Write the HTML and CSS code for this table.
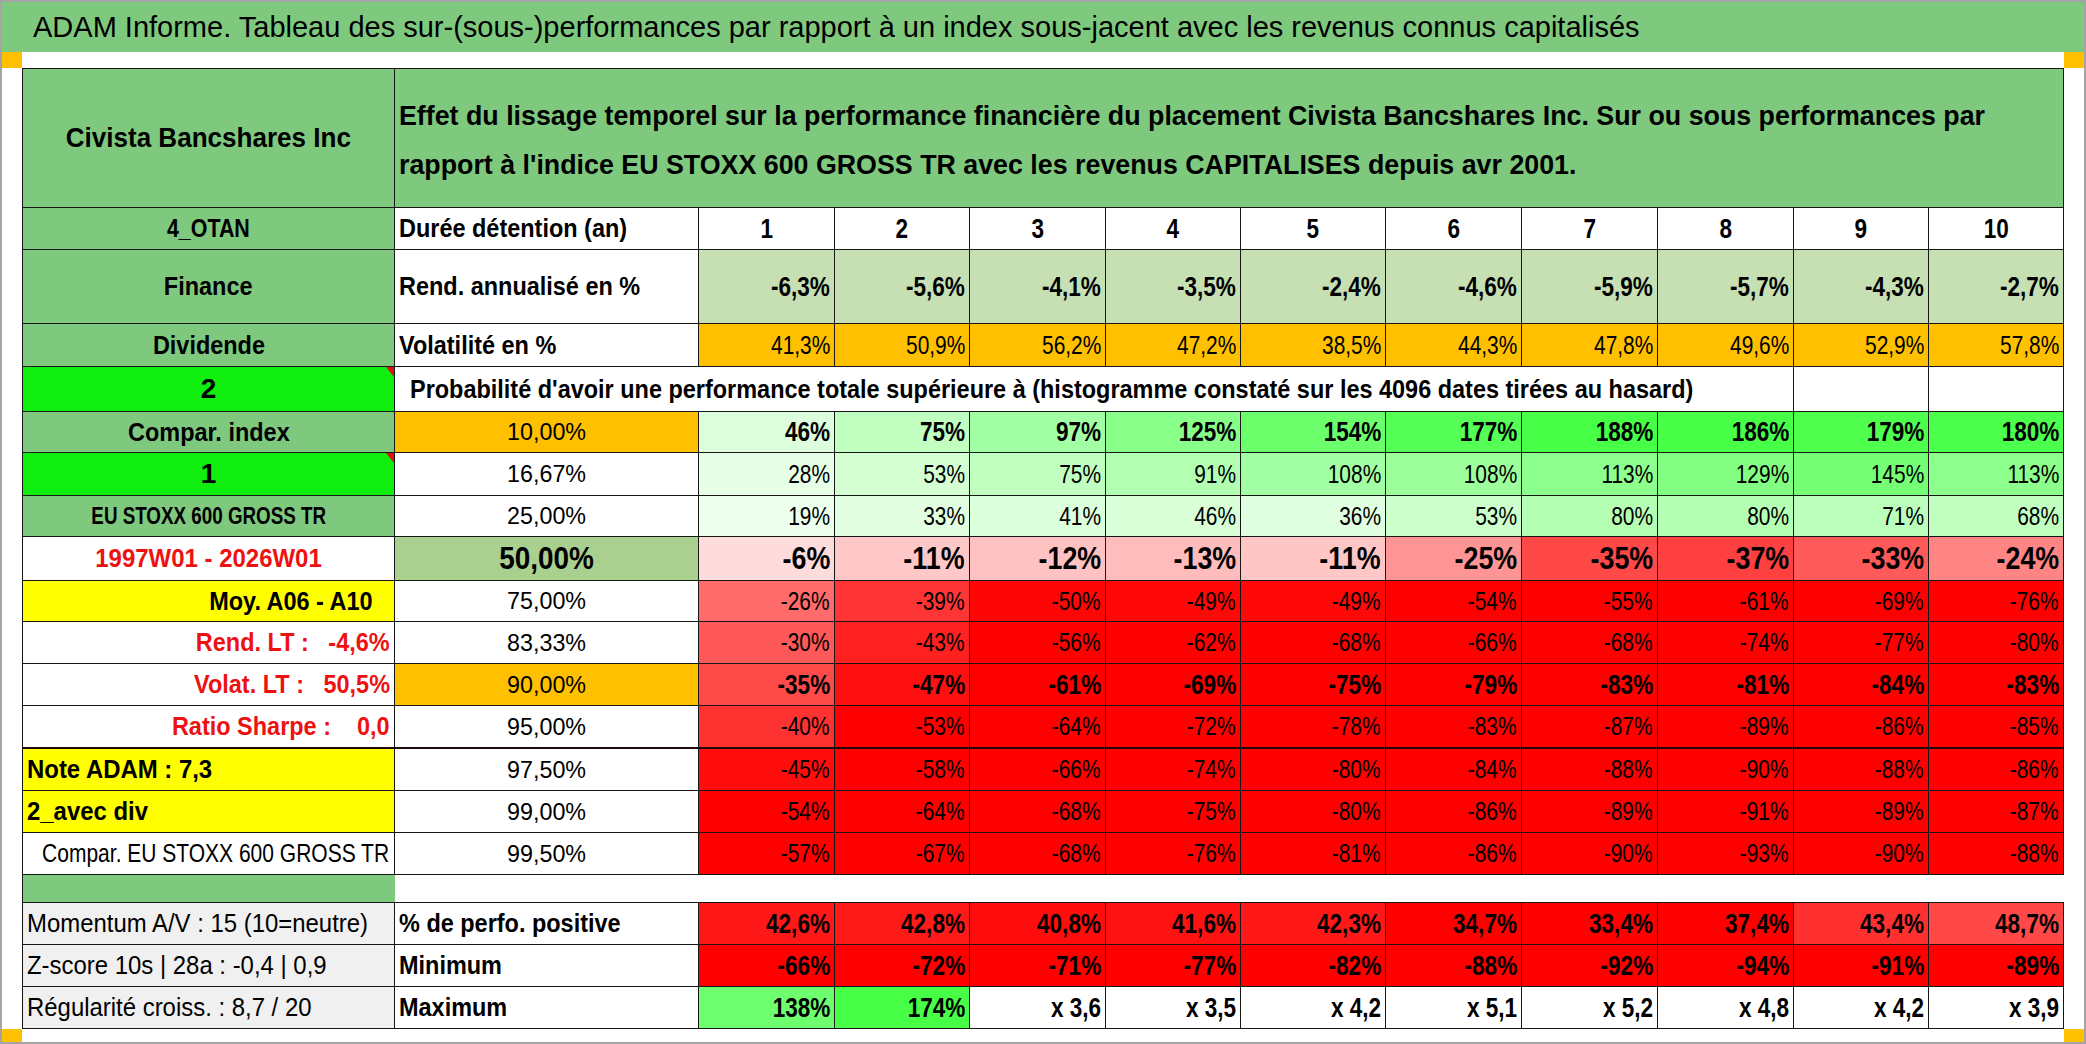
FILE: index.html
```html
<!DOCTYPE html>
<html lang="fr">
<head>
<meta charset="utf-8">
<title>ADAM Informe</title>
<link rel="stylesheet" href="styles.css">
</head>
<body>
<div class="page">
  <header class="title">ADAM Informe. Tableau des sur-(sous-)performances par rapport à un index sous-jacent avec les revenus connus capitalisés</header>
  <div class="strip"><span class="mark"></span><span class="mark"></span></div>
  <div class="body">
    <div class="sheet">
      <!-- R0 -->
      <div class="c g ctr hd1"><span>Civista Bancshares Inc</span></div>
      <div class="c g hd2 s11"><div>Effet du lissage temporel sur la performance financière du placement Civista Bancshares Inc. Sur ou sous performances par<br>rapport à l'indice EU STOXX 600 GROSS TR avec les revenus CAPITALISES depuis avr 2001.</div></div>
      <!-- R1 -->
      <div class="c g ctr lbl sq"><span>4_OTAN</span></div>
      <div class="c lbl"><span>Durée détention (an)</span></div>
      <div class="c ctr vb"><span>1</span></div><div class="c ctr vb"><span>2</span></div><div class="c ctr vb"><span>3</span></div><div class="c ctr vb"><span>4</span></div><div class="c ctr vb"><span>5</span></div><div class="c ctr vb"><span>6</span></div><div class="c ctr vb"><span>7</span></div><div class="c ctr vb"><span>8</span></div><div class="c ctr vb"><span>9</span></div><div class="c ctr vb"><span>10</span></div>
      <!-- R2 -->
      <div class="c g ctr lbl"><span>Finance</span></div>
      <div class="c lbl"><span>Rend. annualisé en %</span></div>
      <div class="c r vb rg"><span>-6,3%</span></div><div class="c r vb rg"><span>-5,6%</span></div><div class="c r vb rg"><span>-4,1%</span></div><div class="c r vb rg"><span>-3,5%</span></div><div class="c r vb rg"><span>-2,4%</span></div><div class="c r vb rg"><span>-4,6%</span></div><div class="c r vb rg"><span>-5,9%</span></div><div class="c r vb rg"><span>-5,7%</span></div><div class="c r vb rg"><span>-4,3%</span></div><div class="c r vb rg"><span>-2,7%</span></div>
      <!-- R3 -->
      <div class="c g ctr lbl"><span>Dividende</span></div>
      <div class="c lbl"><span>Volatilité en %</span></div>
      <div class="c r v o"><span>41,3%</span></div><div class="c r v o"><span>50,9%</span></div><div class="c r v o"><span>56,2%</span></div><div class="c r v o"><span>47,2%</span></div><div class="c r v o"><span>38,5%</span></div><div class="c r v o"><span>44,3%</span></div><div class="c r v o"><span>47,8%</span></div><div class="c r v o"><span>49,6%</span></div><div class="c r v o"><span>52,9%</span></div><div class="c r v o"><span>57,8%</span></div>
      <!-- R4 -->
      <div class="c bg ctr big note"><span>2</span></div>
      <div class="c s9 lbl prob"><span>Probabilité d'avoir une performance totale supérieure à (histogramme constaté sur les 4096 dates tirées au hasard)</span></div>
      <div class="c"></div><div class="c"></div>
      <!-- R5 -->
      <div class="c g ctr lbl"><span>Compar. index</span></div>
      <div class="c ctr p2 o"><span>10,00%</span></div>
      <div class="c r vb" style="background:#dcfedc"><span>46%</span></div><div class="c r vb" style="background:#c0ffc0"><span>75%</span></div><div class="c r vb" style="background:#a3ffa3"><span>97%</span></div><div class="c r vb" style="background:#88ff88"><span>125%</span></div><div class="c r vb" style="background:#6cff6c"><span>154%</span></div><div class="c r vb" style="background:#55ff55"><span>177%</span></div><div class="c r vb" style="background:#46ff46"><span>188%</span></div><div class="c r vb" style="background:#48ff48"><span>186%</span></div><div class="c r vb" style="background:#4eff4e"><span>179%</span></div><div class="c r vb" style="background:#4dff4d"><span>180%</span></div>
      <!-- R6 -->
      <div class="c bg ctr big note"><span>1</span></div>
      <div class="c ctr p2"><span>16,67%</span></div>
      <div class="c r v" style="background:#e7ffe7"><span>28%</span></div><div class="c r v" style="background:#d3ffd3"><span>53%</span></div><div class="c r v" style="background:#c0ffc0"><span>75%</span></div><div class="c r v" style="background:#b2ffb2"><span>91%</span></div><div class="c r v" style="background:#a3ffa3"><span>108%</span></div><div class="c r v" style="background:#9cff9c"><span>108%</span></div><div class="c r v" style="background:#8cff8c"><span>113%</span></div><div class="c r v" style="background:#82ff82"><span>129%</span></div><div class="c r v" style="background:#74ff74"><span>145%</span></div><div class="c r v" style="background:#8cff8c"><span>113%</span></div>
      <!-- R7 -->
      <div class="c g ctr stoxx"><span>EU STOXX 600 GROSS TR</span></div>
      <div class="c ctr p2"><span>25,00%</span></div>
      <div class="c r v" style="background:#edffed"><span>19%</span></div><div class="c r v" style="background:#e2ffe2"><span>33%</span></div><div class="c r v" style="background:#dcffdc"><span>41%</span></div><div class="c r v" style="background:#d8ffd8"><span>46%</span></div><div class="c r v" style="background:#e0ffe0"><span>36%</span></div><div class="c r v" style="background:#ccffcc"><span>53%</span></div><div class="c r v" style="background:#b4ffb4"><span>80%</span></div><div class="c r v" style="background:#b4ffb4"><span>80%</span></div><div class="c r v" style="background:#bcffbc"><span>71%</span></div><div class="c r v" style="background:#c0ffc0"><span>68%</span></div>
      <!-- R8 -->
      <div class="c ctr period red"><span>1997W01 - 2026W01</span></div>
      <div class="c ctr p2x mg"><span>50,00%</span></div>
      <div class="c r vx" style="background:#ffdcdc"><span>-6%</span></div><div class="c r vx" style="background:#ffc8c8"><span>-11%</span></div><div class="c r vx" style="background:#ffc2c2"><span>-12%</span></div><div class="c r vx" style="background:#ffbcbc"><span>-13%</span></div><div class="c r vx" style="background:#ffc6c6"><span>-11%</span></div><div class="c r vx" style="background:#ff9494"><span>-25%</span></div><div class="c r vx" style="background:#ff4848"><span>-35%</span></div><div class="c r vx" style="background:#ff4040"><span>-37%</span></div><div class="c r vx" style="background:#ff5a5a"><span>-33%</span></div><div class="c r vx" style="background:#ff8484"><span>-24%</span></div>
      <!-- R9 -->
      <div class="c y r lbl moy"><span>Moy. A06 - A10</span></div>
      <div class="c ctr p2"><span>75,00%</span></div>
      <div class="c r v" style="background:#ff6a6a"><span>-26%</span></div><div class="c r v" style="background:#ff3434"><span>-39%</span></div><div class="c r v" style="background:#ff0606"><span>-50%</span></div><div class="c r v" style="background:#ff0808"><span>-49%</span></div><div class="c r v" style="background:#ff0808"><span>-49%</span></div><div class="c r v rd"><span>-54%</span></div><div class="c r v rd"><span>-55%</span></div><div class="c r v rd"><span>-61%</span></div><div class="c r v rd"><span>-69%</span></div><div class="c r v rd"><span>-76%</span></div>
      <!-- R10 -->
      <div class="c r lbl red pre"><span>Rend. LT :   -4,6%</span></div>
      <div class="c ctr p2"><span>83,33%</span></div>
      <div class="c r v" style="background:#ff5858"><span>-30%</span></div><div class="c r v" style="background:#ff2020"><span>-43%</span></div><div class="c r v rd"><span>-56%</span></div><div class="c r v rd"><span>-62%</span></div><div class="c r v rd"><span>-68%</span></div><div class="c r v rd"><span>-66%</span></div><div class="c r v rd"><span>-68%</span></div><div class="c r v rd"><span>-74%</span></div><div class="c r v rd"><span>-77%</span></div><div class="c r v rd"><span>-80%</span></div>
      <!-- R11 -->
      <div class="c r lbl red pre"><span>Volat. LT :   50,5%</span></div>
      <div class="c ctr p2 o"><span>90,00%</span></div>
      <div class="c r vb" style="background:#ff4a4a"><span>-35%</span></div><div class="c r vb" style="background:#ff1010"><span>-47%</span></div><div class="c r vb rd"><span>-61%</span></div><div class="c r vb rd"><span>-69%</span></div><div class="c r vb rd"><span>-75%</span></div><div class="c r vb rd"><span>-79%</span></div><div class="c r vb rd"><span>-83%</span></div><div class="c r vb rd"><span>-81%</span></div><div class="c r vb rd"><span>-84%</span></div><div class="c r vb rd"><span>-83%</span></div>
      <!-- R12 -->
      <div class="c r lbl red pre thick"><span>Ratio Sharpe :    0,0</span></div>
      <div class="c ctr p2 thick"><span>95,00%</span></div>
      <div class="c r v thick" style="background:#ff3232"><span>-40%</span></div><div class="c r v thick rd"><span>-53%</span></div><div class="c r v thick rd"><span>-64%</span></div><div class="c r v thick rd"><span>-72%</span></div><div class="c r v thick rd"><span>-78%</span></div><div class="c r v thick rd"><span>-83%</span></div><div class="c r v thick rd"><span>-87%</span></div><div class="c r v thick rd"><span>-89%</span></div><div class="c r v thick rd"><span>-86%</span></div><div class="c r v thick rd"><span>-85%</span></div>
      <!-- R13 -->
      <div class="c y lbl note-adam"><span>Note ADAM : 7,3</span></div>
      <div class="c ctr p2"><span>97,50%</span></div>
      <div class="c r v" style="background:#ff0c0c"><span>-45%</span></div><div class="c r v rd"><span>-58%</span></div><div class="c r v rd"><span>-66%</span></div><div class="c r v rd"><span>-74%</span></div><div class="c r v rd"><span>-80%</span></div><div class="c r v rd"><span>-84%</span></div><div class="c r v rd"><span>-88%</span></div><div class="c r v rd"><span>-90%</span></div><div class="c r v rd"><span>-88%</span></div><div class="c r v rd"><span>-86%</span></div>
      <!-- R14 -->
      <div class="c y lbl note-adam"><span>2_avec div</span></div>
      <div class="c ctr p2"><span>99,00%</span></div>
      <div class="c r v rd"><span>-54%</span></div><div class="c r v rd"><span>-64%</span></div><div class="c r v rd"><span>-68%</span></div><div class="c r v rd"><span>-75%</span></div><div class="c r v rd"><span>-80%</span></div><div class="c r v rd"><span>-86%</span></div><div class="c r v rd"><span>-89%</span></div><div class="c r v rd"><span>-91%</span></div><div class="c r v rd"><span>-89%</span></div><div class="c r v rd"><span>-87%</span></div>
      <!-- R15 -->
      <div class="c r cmp"><span>Compar. EU STOXX 600 GROSS TR</span></div>
      <div class="c ctr p2"><span>99,50%</span></div>
      <div class="c r v rd"><span>-57%</span></div><div class="c r v rd"><span>-67%</span></div><div class="c r v rd"><span>-68%</span></div><div class="c r v rd"><span>-76%</span></div><div class="c r v rd"><span>-81%</span></div><div class="c r v rd"><span>-86%</span></div><div class="c r v rd"><span>-90%</span></div><div class="c r v rd"><span>-93%</span></div><div class="c r v rd"><span>-90%</span></div><div class="c r v rd"><span>-88%</span></div>
      <!-- R16 -->
      <div class="c g gap"></div>
      <div class="c s11 gap"></div>
      <!-- R17 -->
      <div class="c lg reg"><span>Momentum A/V : 15 (10=neutre)</span></div>
      <div class="c lbl"><span>% de perfo. positive</span></div>
      <div class="c r vb" style="background:#ff1818"><span>42,6%</span></div><div class="c r vb" style="background:#ff1a1a"><span>42,8%</span></div><div class="c r vb" style="background:#ff0c0c"><span>40,8%</span></div><div class="c r vb" style="background:#ff1212"><span>41,6%</span></div><div class="c r vb" style="background:#ff1818"><span>42,3%</span></div><div class="c r vb rd"><span>34,7%</span></div><div class="c r vb rd"><span>33,4%</span></div><div class="c r vb rd"><span>37,4%</span></div><div class="c r vb" style="background:#ff3030"><span>43,4%</span></div><div class="c r vb" style="background:#ff4848"><span>48,7%</span></div>
      <!-- R18 -->
      <div class="c lg reg"><span>Z-score 10s | 28a : -0,4 | 0,9</span></div>
      <div class="c lbl"><span>Minimum</span></div>
      <div class="c r vb rd"><span>-66%</span></div><div class="c r vb rd"><span>-72%</span></div><div class="c r vb rd"><span>-71%</span></div><div class="c r vb rd"><span>-77%</span></div><div class="c r vb rd"><span>-82%</span></div><div class="c r vb rd"><span>-88%</span></div><div class="c r vb rd"><span>-92%</span></div><div class="c r vb rd"><span>-94%</span></div><div class="c r vb rd"><span>-91%</span></div><div class="c r vb rd"><span>-89%</span></div>
      <!-- R19 -->
      <div class="c lg reg"><span>Régularité croiss. : 8,7 / 20</span></div>
      <div class="c lbl"><span>Maximum</span></div>
      <div class="c r vb" style="background:#6eff6e"><span>138%</span></div><div class="c r vb" style="background:#47ff47"><span>174%</span></div><div class="c r vb"><span>x 3,6</span></div><div class="c r vb"><span>x 3,5</span></div><div class="c r vb"><span>x 4,2</span></div><div class="c r vb"><span>x 5,1</span></div><div class="c r vb"><span>x 5,2</span></div><div class="c r vb"><span>x 4,8</span></div><div class="c r vb"><span>x 4,2</span></div><div class="c r vb"><span>x 3,9</span></div>
    </div>
  </div>
  <div class="strip bottom"><span class="mark"></span><span class="mark"></span></div>
</div>
</body>
</html>
```

FILE: styles.css
```css
html, body {
  margin: 0;
  padding: 0;
  background: #ffffff;
}

.page {
  width: 2086px;
  height: 1044px;
  box-sizing: border-box;
  border: 2px solid #a4a4a4;
  background: #ffffff;
  display: flex;
  flex-direction: column;
  overflow: hidden;
}

.title {
  height: 50px;
  flex: none;
  background: #7fc97f;
  line-height: 50px;
  padding-left: 31px;
  font-family: "Liberation Sans", Arial, sans-serif;
  font-size: 29px;
  color: #000;
  white-space: nowrap;
}

.strip {
  height: 16px;
  flex: none;
  display: flex;
  justify-content: space-between;
}

.strip.bottom {
  height: 13px;
}

.mark {
  width: 20px;
  background: #ffc000;
}

.body {
  flex: none;
  padding: 0 20px;
}

.sheet {
  display: grid;
  grid-template-columns: 372px 304px 136px 135px 136px 135px 145px 136px 136px 136px 135px 135px;
  grid-template-rows: 139px 42px 74px 43px 45px 41px 43px 41px 44px 41px 42px 42px 43px 42px 42px 42px 28px 42px 42px 42px;
  border-left: 1px solid #161616;
  border-top: 1px solid #161616;
  font-family: "Liberation Sans", Arial, sans-serif;
  font-size: 24px;
  color: #000;
}

.c {
  box-sizing: border-box;
  border-right: 1px solid #161616;
  border-bottom: 1px solid #161616;
  display: flex;
  align-items: center;
  justify-content: flex-start;
  padding: 0 4px;
  overflow: hidden;
  white-space: nowrap;
  min-width: 0;
  background: #ffffff;
}

.ctr { justify-content: center; }
.r { justify-content: flex-end; }

.s11 { grid-column: span 11; }
.s9 { grid-column: span 9; }

/* fills */
.g { background: #7fc97f; }
.bg { background: #10ee10; }
.y { background: #ffff00; }
.o { background: #ffc000; }
.lg { background: #f0f0f0; }
.rg { background: #c6e0b4; }
.mg { background: #a9d08e; }
.rd { background: #ff0000; }

/* condensed rendering (the sheet font is narrower than Arial) */
.c > span {
  display: inline-block;
  transform-origin: 0 50%;
}

.ctr > span {
  transform-origin: 50% 50%;
}

.r > span {
  transform-origin: 100% 50%;
}

.hd1 {
  font-size: 28px;
  font-weight: bold;
}

.hd1 > span {
  transform: scaleX(0.93);
}

.hd2 {
  font-size: 26.8px;
  font-weight: bold;
  line-height: 49px;
  padding-left: 4px;
  padding-top: 6px;
}

.lbl {
  font-size: 25.5px;
  font-weight: bold;
}

.lbl > span {
  transform: scaleX(0.92);
}

.sq {
  font-size: 25.5px;
}

.sq > span {
  transform: scaleX(0.84);
}

.reg {
  font-size: 26px;
  font-weight: normal;
}

.reg > span {
  transform: scaleX(0.92);
}

.prob {
  padding-left: 15px;
}

.big {
  font-size: 28px;
  font-weight: bold;
}

.stoxx {
  font-size: 23.5px;
  font-weight: bold;
}

.stoxx > span {
  transform: scaleX(0.8);
}

.cmp {
  font-size: 25px;
  padding-right: 5px;
}

.cmp > span {
  transform: scaleX(0.84);
}

.period {
  font-size: 25.5px;
  font-weight: bold;
}

.period > span {
  transform: scaleX(0.94);
}

.note-adam {
  font-size: 26px;
}

.red { color: #ee1111; }
.pre { white-space: pre; }
.moy { padding-right: 21px; }

.v {
  font-size: 25.5px;
}

.v > span {
  transform: scaleX(0.82);
}

.vb {
  font-size: 27.5px;
  font-weight: bold;
}

.vb > span {
  transform: scaleX(0.82);
}

.vx {
  font-size: 30.5px;
  font-weight: bold;
}

.vx > span {
  transform: scaleX(0.88);
}

.p2 {
  font-size: 24.5px;
}

.p2 > span {
  transform: scaleX(0.95);
}

.p2x {
  font-size: 31px;
  font-weight: bold;
}

.p2x > span {
  transform: scaleX(0.9);
}

.thick {
  border-bottom: 2px solid #1e0a0a;
}

.gap {
  border-right: none;
}

.note {
  position: relative;
}

.note::after {
  content: "";
  position: absolute;
  top: 0;
  right: 0;
  width: 0;
  height: 0;
  border-top: 10px solid #e01010;
  border-left: 8px solid transparent;
}
```
